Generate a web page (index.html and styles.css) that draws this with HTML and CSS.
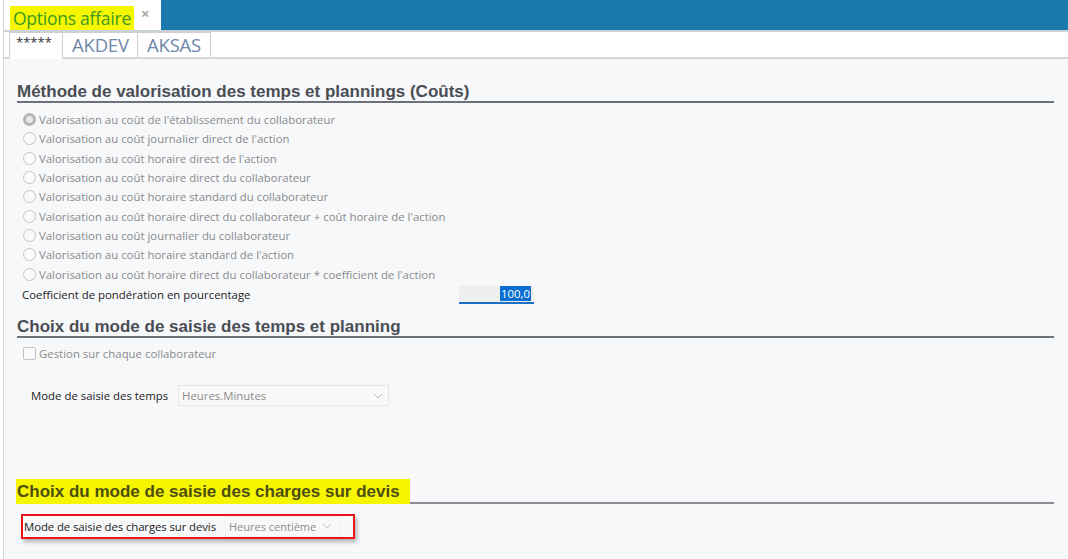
FILE: index.html
```html
<!DOCTYPE html>
<html lang="fr">
<head>
<meta charset="utf-8">
<title>Options affaire</title>
<link rel="stylesheet" href="styles.css">
</head>
<body>
<div class="app">
  <div class="topbar">
    <div class="doctab">
      <span class="doctitle">Options affaire</span>
      <span class="close">×</span>
    </div>
    <div class="bluebar"></div>
  </div>
  <div class="tabs">
    <div class="tab active">*****</div>
    <div class="tab">AKDEV</div>
    <div class="tab">AKSAS</div>
  </div>
  <div class="content">
    <h2 class="section s1"><span>Méthode de valorisation des temps et plannings (Coûts)</span></h2>
    <div class="radios">
      <div class="radio"><span class="rb checked"></span>Valorisation au coût de l'établissement du collaborateur</div>
      <div class="radio"><span class="rb"></span>Valorisation au coût journalier direct de l'action</div>
      <div class="radio"><span class="rb"></span>Valorisation au coût horaire direct de l'action</div>
      <div class="radio"><span class="rb"></span>Valorisation au coût horaire direct du collaborateur</div>
      <div class="radio"><span class="rb"></span>Valorisation au coût horaire standard du collaborateur</div>
      <div class="radio"><span class="rb"></span>Valorisation au coût horaire direct du collaborateur + coût horaire de l'action</div>
      <div class="radio"><span class="rb"></span>Valorisation au coût journalier du collaborateur</div>
      <div class="radio"><span class="rb"></span>Valorisation au coût horaire standard de l'action</div>
      <div class="radio"><span class="rb"></span>Valorisation au coût horaire direct du collaborateur * coefficient de l'action</div>
    </div>
    <div class="coef">
      <span class="coef-label">Coefficient de pondération en pourcentage</span>
      <span class="numinput"><span class="sel">100,0</span></span>
    </div>
    <h2 class="section s2"><span>Choix du mode de saisie des temps et planning</span></h2>
    <div class="check"><span class="cb"></span>Gestion sur chaque collaborateur</div>
    <div class="field temps">
      <span class="flabel">Mode de saisie des temps</span>
      <span class="select w-temps">Heures.Minutes<svg class="chev" viewBox="0 0 10 6" width="10" height="6"><path d="M1 1 L5 5 L9 1" fill="none" stroke="#b8b8b8" stroke-width="1"/></svg></span>
    </div>
    <h2 class="section s3"><span class="hl">Choix du mode de saisie des charges sur devis</span><span class="rule"></span></h2>
    <div class="redbox">
      <span class="flabel">Mode de saisie des charges sur devis</span>
      <span class="select w-devis">Heures centième<svg class="chev" viewBox="0 0 10 6" width="10" height="6"><path d="M1 1 L5 5 L9 1" fill="none" stroke="#c4c4c4" stroke-width="1"/></svg></span>
    </div>
  </div>
</div>
</body>
</html>
```

FILE: styles.css
```css
* { box-sizing: border-box; }
html, body { margin: 0; padding: 0; height: 100%; }
body {
  font-family: "Open Sans", "Noto Sans", sans-serif;
  background: #ffffff;
  overflow: hidden;
}
.app {
  margin-left: 3px;
  border-left: 1px solid #d4d4d4;
  height: 100%;
  display: flex;
  flex-direction: column;
}
.topbar {
  display: flex;
  height: 32px;
  border-bottom: 2px solid #c9d3d8;
}
.doctab {
  width: 157px;
  background: #fff;
  display: flex;
  align-items: flex-end;
  padding-left: 6px;
}
.doctitle {
  background: #f6f600;
  color: #3c9a20;
  font-size: 17.5px;
  line-height: 24px;
  height: 24px;
  padding: 0 0 0 3px;
  width: 124px;
  white-space: nowrap;
  letter-spacing: -0.25px;
}
.close {
  color: #a8a8a8;
  font-size: 15px;
  line-height: 15px;
  align-self: flex-start;
  margin-top: 6px;
  margin-left: 7px;
  font-weight: bold;
}
.bluebar {
  flex: 1;
  background: #1a7aab;
}
.tabs {
  display: flex;
  height: 27px;
  background: #fff;
  border-bottom: 2px solid #d6d6d6;
  padding-left: 5px;
  align-items: flex-end;
}
.tab {
  height: 25px;
  border: 1px solid #d0d0d0;
  border-bottom: none;
  border-left: none;
  color: #6d87a8;
  font-size: 18.5px;
  line-height: 23px;
  padding: 0 9px;
  white-space: nowrap;
  letter-spacing: -0.2px;
}
.tab.active {
  border-left: 1px solid #d0d0d0;
  color: #333;
  font-size: 13px;
  line-height: 18px;
  height: 27px;
  margin-bottom: -2px;
  background: #fff;
  width: 54px;
  padding: 0 6px;
  letter-spacing: 0;
}
.tab:nth-child(2) { width: 75px; }
.tab:nth-child(3) { width: 73px; }
.content {
  flex: 1;
  background: #f7f8fa;
  padding: 0 14px 0 13px;
}
.section {
  margin: 0;
  font-family: "Liberation Sans", Arial, sans-serif;
  font-weight: bold;
  font-size: 17px;
  line-height: 19px;
  color: #4a4e54;
  border-bottom: 2px solid #6c7078;
  display: flex;
  white-space: nowrap;
}
.s1 { margin-top: 23px; }
.s2 { margin-top: 12px; }
.s3 {
  margin-top: 73px;
  border-bottom: none;
}
.s3 .hl {
  background: #f6f600;
  color: #4d4d10;
  height: 25px;
  line-height: 25px;
  padding-left: 1px;
  padding-right: 10px;
  margin-left: -1px;
}
.s3 .rule {
  flex: 1;
  border-bottom: 2px solid #8a8d92;
}
.radios { margin-top: 7px; }
.radio {
  height: 19.3px;
  display: flex;
  align-items: center;
  font-size: 11.4px;
  color: #8a8a8a;
  padding-left: 6px;
  white-space: nowrap;
}
.rb {
  width: 13px;
  height: 13px;
  border-radius: 50%;
  border: 1px solid #c4c4c4;
  background: #fafafa;
  margin-right: 3px;
  flex: none;
}
.rb.checked {
  border: 3px solid #b4b4b4;
  background: #e8e8e8;
}
.coef {
  display: flex;
  align-items: center;
  height: 20px;
  margin-top: 1px;
  font-size: 11.4px;
  color: #222;
  padding-left: 5px;
}
.coef-label { width: 437px; white-space: nowrap; }
.numinput {
  width: 75px;
  height: 18px;
  background: #efefef;
  border-bottom: 2px solid #1a6fc4;
  display: flex;
  justify-content: flex-end;
  align-items: center;
  padding-right: 3px;
}
.sel {
  background: #0a6fd0;
  color: #fff;
  font-size: 11.4px;
  line-height: 15px;
  padding: 0 1px;
}
.check {
  display: flex;
  align-items: center;
  height: 18px;
  margin-top: 7px;
  font-size: 11.4px;
  color: #8a8a8a;
  padding-left: 6px;
}
.cb {
  width: 13px;
  height: 13px;
  border: 1px solid #c4c4c4;
  border-radius: 2px;
  background: #fafafa;
  margin-right: 3px;
}
.field {
  display: flex;
  align-items: center;
}
.temps {
  margin-top: 23px;
  padding-left: 14px;
  height: 20px;
}
.flabel {
  font-size: 11.4px;
  color: #222;
  white-space: nowrap;
}
.temps .flabel { width: 147px; }
.select {
  display: flex;
  align-items: center;
  justify-content: space-between;
  height: 21px;
  background: #f9f9f9;
  border: 1px solid #e6e6e6;
  font-size: 11.4px;
  color: #8c8c8c;
  padding: 0 5px 0 3px;
  white-space: nowrap;
}
.w-temps { width: 211px; }
.w-devis {
  width: 115px;
  border-color: #eeeeee;
  font-size: 11px;
  padding-right: 8px;
  gap: 6px;
}
.chev { flex: none; }
.redbox {
  margin-top: 10px;
  margin-left: 4px;
  width: 334px;
  height: 25px;
  border: 2px solid #e8141e;
  box-shadow: 2px 3px 4px rgba(0,0,0,0.28);
  display: flex;
  align-items: center;
  padding-left: 1px;
}
.redbox .flabel { width: 201px; letter-spacing: -0.1px; }
```
